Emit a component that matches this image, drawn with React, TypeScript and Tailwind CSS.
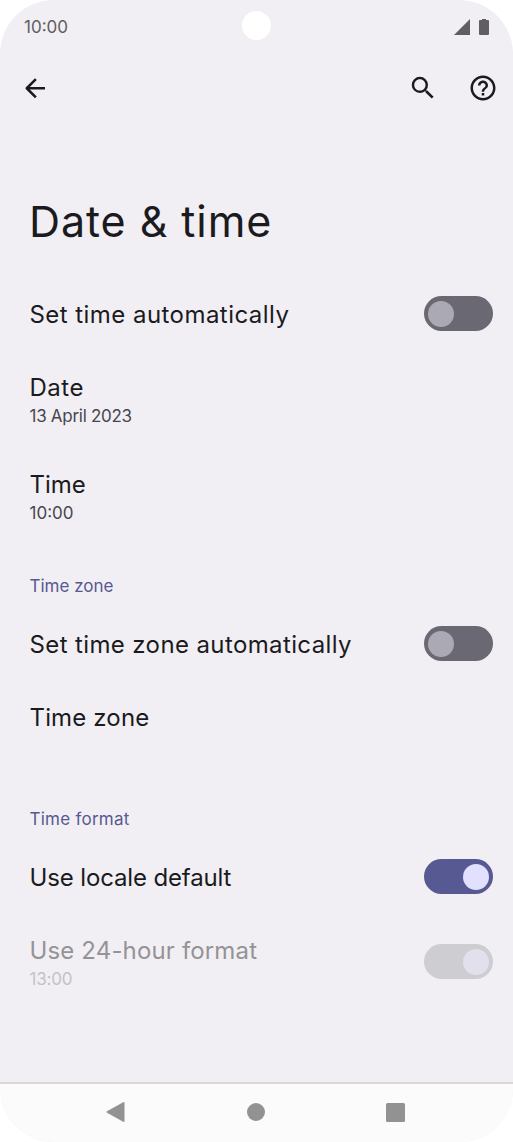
import { clsx } from 'clsx';

type ToggleState = 'off' | 'on' | 'disabled';

const Toggle = ({ state }: { state: ToggleState }) => (
  <div
    role="switch"
    aria-checked={state !== 'off'}
    className={clsx(
      'mb-[2px] flex h-[35px] w-[69.5px] shrink-0 items-center rounded-full px-[4.5px]',
      state === 'off' && 'justify-start bg-[#6a6973]',
      state === 'on' && 'justify-end bg-[#575992]',
      state === 'disabled' && 'justify-end bg-[#cecdd2]',
    )}
  >
    <div
      className={clsx(
        'size-[26px] rounded-full',
        state === 'off' && 'bg-[#abaab4]',
        state === 'on' && 'bg-[#e1e0ff]',
        state === 'disabled' && 'bg-[#e2e0ec]',
      )}
    />
  </div>
);

interface PreferenceProps {
  title: string;
  titleClass?: string;
  summary?: string;
  summaryClass?: string;
  toggle?: ToggleState;
}

const Preference = ({ title, titleClass, summary, summaryClass, toggle }: PreferenceProps) => {
  const disabled = toggle === 'disabled';

  return (
    <div className={clsx('flex items-center justify-between pr-5 pl-[29.5px]', summary ? 'h-[97px]' : 'h-[73px]')}>
      <div className={clsx('whitespace-nowrap', summary && 'pt-[3px]')}>
        <p className={clsx('text-[24px] leading-[30px]', titleClass, disabled ? 'text-[#949397]' : 'text-[#1b1b1f]')}>
          {title}
        </p>
        {summary && (
          <p className={clsx('text-[17px] leading-[26px]', summaryClass, disabled ? 'text-[#c3c2c7]' : 'text-[#47464f]')}>
            {summary}
          </p>
        )}
      </div>
      {toggle && <Toggle state={toggle} />}
    </div>
  );
};

const Category = ({ label, className }: { label: string; className: string }) => (
  <h2 className={clsx('flex items-end pb-[10px] pl-[29.5px] text-[17px] leading-6 text-[#575992]', className)}>
    {label}
  </h2>
);

const StatusBar = () => (
  <div className="grid h-[55px] grid-cols-3 items-center pr-6 pl-[24px] text-[#5f5e62]">
    <span className="pt-px text-[17px]">10:00</span>
    {/* Camera cutout */}
    <div className="mb-1 size-[29px] justify-self-center rounded-full bg-white" />
    <div className="flex items-center justify-end gap-[9px] pb-px">
      <svg width="16" height="16" viewBox="0 0 16 16" fill="currentColor">
        <path d="M16 0v16H0z" />
      </svg>
      <svg width="10" height="16" viewBox="0 0 10 16" fill="currentColor">
        <path d="M3 0h4v1h2q1 0 1 1V15q0 1-1 1H1q-1 0-1-1V2q0-1 1-1h2z" />
      </svg>
    </div>
  </div>
);

const AppBar = () => (
  <div className="flex h-[66px] items-center justify-between pr-[15px] pl-5 text-[#1b1b1f]">
    <svg width="30" height="30" viewBox="0 0 24 24" fill="none" stroke="currentColor" strokeWidth="2">
      <path d="M20 12.2H5.2M12.7 4.9 5.4 12.2l7.3 7.3" strokeLinejoin="round" />
    </svg>
    <div className="flex items-center gap-[30px]">
      <svg width="30" height="30" viewBox="0 0 24 24" fill="currentColor">
        <path d="M15.5 14h-.79l-.28-.27A6.471 6.471 0 0 0 16 9.5 6.5 6.5 0 1 0 9.5 16c1.61 0 3.09-.59 4.23-1.57l.27.28v.79l5 4.99L20.49 19l-4.99-5zm-6 0C7.01 14 5 11.99 5 9.5S7.01 5 9.5 5 14 7.01 14 9.5 11.99 14 9.5 14z" />
      </svg>
      <svg width="30" height="30" viewBox="0 0 24 24" fill="currentColor">
        <path d="M11 18h2v-2h-2v2zm1-16C6.48 2 2 6.48 2 12s4.48 10 10 10 10-4.48 10-10S17.52 2 12 2zm0 18c-4.41 0-8-3.59-8-8s3.59-8 8-8 8 3.59 8 8-3.59 8-8 8zm0-14c-2.21 0-4 1.79-4 4h2c0-1.1.9-2 2-2s2 .9 2 2c0 2-3 1.75-3 5h2c0-2.25 3-2.5 3-5 0-2.21-1.79-4-4-4z" />
      </svg>
    </div>
  </div>
);

const NavigationBar = () => (
  <div className="flex h-[60px] items-center justify-between border-t-2 border-[#d9d8db] bg-[#fbfbfb] pr-[108px] pb-[2px] pl-[106px] text-[#929292]">
    <svg width="19" height="20" viewBox="0 0 19 20" fill="currentColor">
      <path d="M17.2.3Q18.5-.3 18.5 1v18q0 1.3-1.3.7L1 10.7q-1-.7 0-1.4z" />
    </svg>
    <div className="size-[18px] rounded-full bg-current" />
    <div className="size-[19px] rounded-[1.5px] bg-current" />
  </div>
);

export default function App() {
  return (
    <div className="h-[1142px] w-[513px] bg-white font-['Inter',sans-serif]">
      <div className="flex h-full flex-col overflow-hidden rounded-[54px] bg-[#f1eff3]">
        <StatusBar />
        <AppBar />
        <h1 className="h-[157px] pt-[74px] pl-[29px] text-[43px] leading-[52px] tracking-[0.93px] text-[#1b1b1f]">
          Date &amp; time
        </h1>
        <main className="flex-1">
          <Preference title="Set time automatically" titleClass="tracking-[0.45px]" toggle="off" />
          <Preference
            title="Date"
            titleClass="tracking-[0.5px]"
            summary="13 April 2023"
            summaryClass="tracking-[-0.28px]"
          />
          <Preference title="Time" summary="10:00" />
          <Category label="Time zone" className="h-[63px]" />
          <Preference title="Set time zone automatically" titleClass="tracking-[0.38px]" toggle="off" />
          <Preference title="Time zone" titleClass="tracking-[0.15px]" />
          <Category label="Time format" className="h-[87px] tracking-[0.25px]" />
          <Preference title="Use locale default" titleClass="tracking-[-0.14px]" toggle="on" />
          <Preference
            title="Use 24-hour format"
            titleClass="tracking-[0.15px]"
            summary="13:00"
            summaryClass="tracking-[-0.2px]"
            toggle="disabled"
          />
        </main>
        <NavigationBar />
      </div>
    </div>
  );
}
